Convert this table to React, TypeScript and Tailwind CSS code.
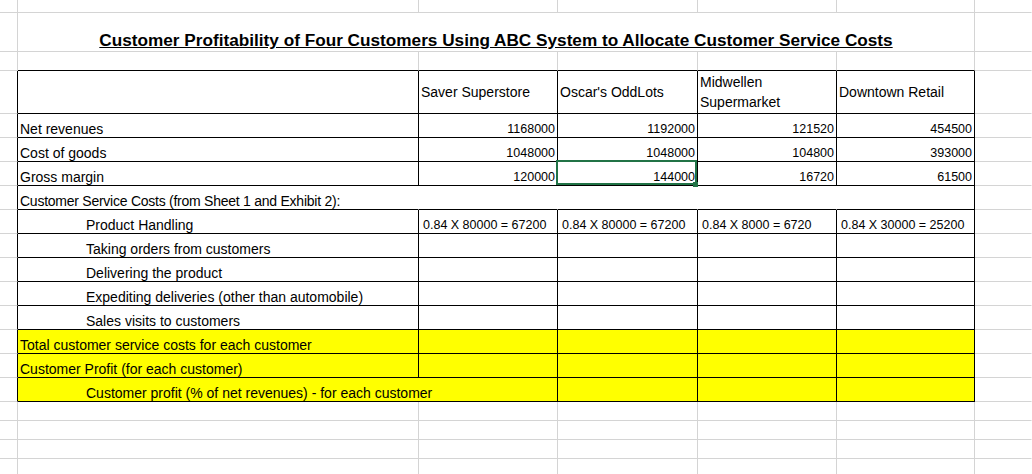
import React from 'react'
import clsx from 'clsx'

type Line = 'g' | 'k' | 'n'

// right / bottom edge of a cell: gray gridline, black border, or nothing
const RIGHT: Record<Line, string> = {
    g: 'border-r border-r-[#d4d4d4]',
    k: 'border-r border-r-black',
    n: 'border-r border-r-transparent'
}
const BOTTOM: Record<Line, string> = {
    g: 'border-b border-b-[#d4d4d4]',
    k: 'border-b border-b-black',
    n: 'border-b border-b-transparent'
}

const W = {
    h: 'w-[18px]',
    a: 'w-[401px]',
    b: 'w-[139px]',
    c: 'w-[140px]',
    d: 'w-[139px]',
    e: 'w-[138px]',
    f: 'flex-1',
    ab: 'w-[540px]',
    ae: 'w-[957px]'
}

function Cell({
    w,
    r = 'g',
    b = 'g',
    className,
    children
}: {
    w: keyof typeof W
    r?: Line
    b?: Line
    className?: string
    children?: React.ReactNode
}) {
    return <div className={clsx('shrink-0 h-full flex', W[w], RIGHT[r], BOTTOM[b], className)}>{children}</div>
}

function Row({ h, children }: { h: string; children: React.ReactNode }) {
    return <div className={clsx('flex', h)}>{children}</div>
}

const label = 'items-end text-[14px] leading-4 whitespace-nowrap'
const num = 'items-end justify-end pr-[2px] text-[12.5px] leading-4 whitespace-nowrap'
const formula = 'items-end pl-[4px] text-[12.5px] leading-4 whitespace-nowrap'
const head = 'items-center pl-[2px] text-[14px] leading-5'

function GridRow({ h }: { h: string }) {
    return (
        <Row h={h}>
            <Cell w="h" />
            <Cell w="a" />
            <Cell w="b" />
            <Cell w="c" />
            <Cell w="d" />
            <Cell w="e" />
            <Cell w="f" r="n" />
        </Row>
    )
}

function ValueRow({ name, values, selected }: { name: string; values: string[]; selected?: number }) {
    const cols = ['b', 'c', 'd', 'e'] as const
    return (
        <Row h="h-[24px]">
            <Cell w="h" r="k" />
            <Cell w="a" r="k" b="k" className={clsx(label, 'pl-[2px]')}>
                {name}
            </Cell>
            {cols.map((c, i) => (
                <Cell key={c} w={c} r="k" b="k" className={clsx(num, selected === i && 'relative')}>
                    {values[i]}
                    {selected === i && (
                        <>
                            <div className="absolute -left-[2px] -top-[2px] right-0 bottom-0 border-2 border-[#217346]" />
                            <div className="absolute -right-[1px] -bottom-[2px] w-[5px] h-[5px] bg-[#217346]" />
                        </>
                    )}
                </Cell>
            ))}
            <Cell w="f" r="n" />
        </Row>
    )
}

function CostRow({ name, values = [], yellow, indent }: { name: string; values?: string[]; yellow?: boolean; indent?: boolean }) {
    const cols = ['b', 'c', 'd', 'e'] as const
    const fill = yellow ? 'bg-[#ffff00]' : ''
    return (
        <Row h="h-[24px]">
            <Cell w="h" r="k" />
            <Cell w="a" r="k" b="k" className={clsx(label, fill, indent ? 'pl-[68px]' : 'pl-[2px]')}>
                {name}
            </Cell>
            {cols.map((c, i) => (
                <Cell key={c} w={c} r="k" b="k" className={clsx(formula, fill)}>
                    {values[i]}
                </Cell>
            ))}
            <Cell w="f" r="n" />
        </Row>
    )
}

export default function App() {
    return (
        <div className="w-[1032px] h-[474px] overflow-hidden bg-white text-black font-['Liberation_Sans',Arial,sans-serif]">
            <GridRow h="h-[13px]" />
            <Row h="h-[39px]">
                <Cell w="h" />
                <Cell w="ae" className="items-end justify-center">
                    <span className="text-[17.2px] leading-[22px] font-bold underline whitespace-nowrap">
                        Customer Profitability of Four Customers Using ABC System to Allocate Customer Service Costs
                    </span>
                </Cell>
                <Cell w="f" r="n" />
            </Row>
            <Row h="h-[19px]">
                <Cell w="h" />
                <Cell w="a" b="k" />
                <Cell w="b" b="k" />
                <Cell w="c" b="k" />
                <Cell w="d" b="k" />
                <Cell w="e" b="k" />
                <Cell w="f" r="n" />
            </Row>
            <Row h="h-[43px]">
                <Cell w="h" r="k" />
                <Cell w="a" r="k" b="k" />
                <Cell w="b" r="k" b="k" className={head}>
                    Saver Superstore
                </Cell>
                <Cell w="c" r="k" b="k" className={head}>
                    Oscar's OddLots
                </Cell>
                <Cell w="d" r="k" b="k" className={head}>
                    <span>
                        Midwellen
                        <br />
                        Supermarket
                    </span>
                </Cell>
                <Cell w="e" r="k" b="k" className={head}>
                    Downtown Retail
                </Cell>
                <Cell w="f" r="n" />
            </Row>
            <ValueRow name="Net revenues" values={['1168000', '1192000', '121520', '454500']} />
            <ValueRow name="Cost of goods" values={['1048000', '1048000', '104800', '393000']} />
            <ValueRow name="Gross margin" values={['120000', '144000', '16720', '61500']} selected={1} />
            <Row h="h-[24px]">
                <Cell w="h" r="k" />
                <Cell w="a" r="n" b="k" className={clsx(label, 'pl-[2px] tracking-[-0.25px]')}>
                    Customer Service Costs (from Sheet 1 and Exhibit 2):
                </Cell>
                <Cell w="b" r="n" b="k" />
                <Cell w="c" r="n" b="k" />
                <Cell w="d" r="n" b="k" />
                <Cell w="e" r="k" b="k" />
                <Cell w="f" r="n" />
            </Row>
            <CostRow
                name="Product Handling"
                indent
                values={['0.84 X 80000 = 67200', '0.84 X 80000 = 67200', '0.84 X 8000 = 6720', '0.84 X 30000 = 25200']}
            />
            <CostRow name="Taking orders from customers" indent />
            <CostRow name="Delivering the product" indent />
            <CostRow name="Expediting deliveries (other than automobile)" indent />
            <CostRow name="Sales visits to customers" indent />
            <CostRow name="Total customer service costs for each customer" yellow />
            <CostRow name="Customer Profit (for each customer)" yellow />
            <Row h="h-[24px]">
                <Cell w="h" r="k" />
                <Cell w="ab" r="k" b="k" className={clsx(label, 'pl-[68px] bg-[#ffff00]')}>
                    Customer profit (% of net revenues) - for each customer
                </Cell>
                <Cell w="c" r="k" b="k" className="bg-[#ffff00]" />
                <Cell w="d" r="k" b="k" className="bg-[#ffff00]" />
                <Cell w="e" r="k" b="k" className="bg-[#ffff00]" />
                <Cell w="f" r="n" />
            </Row>
            <GridRow h="h-[19px]" />
            <GridRow h="h-[19px]" />
            <GridRow h="h-[19px]" />
            <GridRow h="h-[19px]" />
        </div>
    )
}
